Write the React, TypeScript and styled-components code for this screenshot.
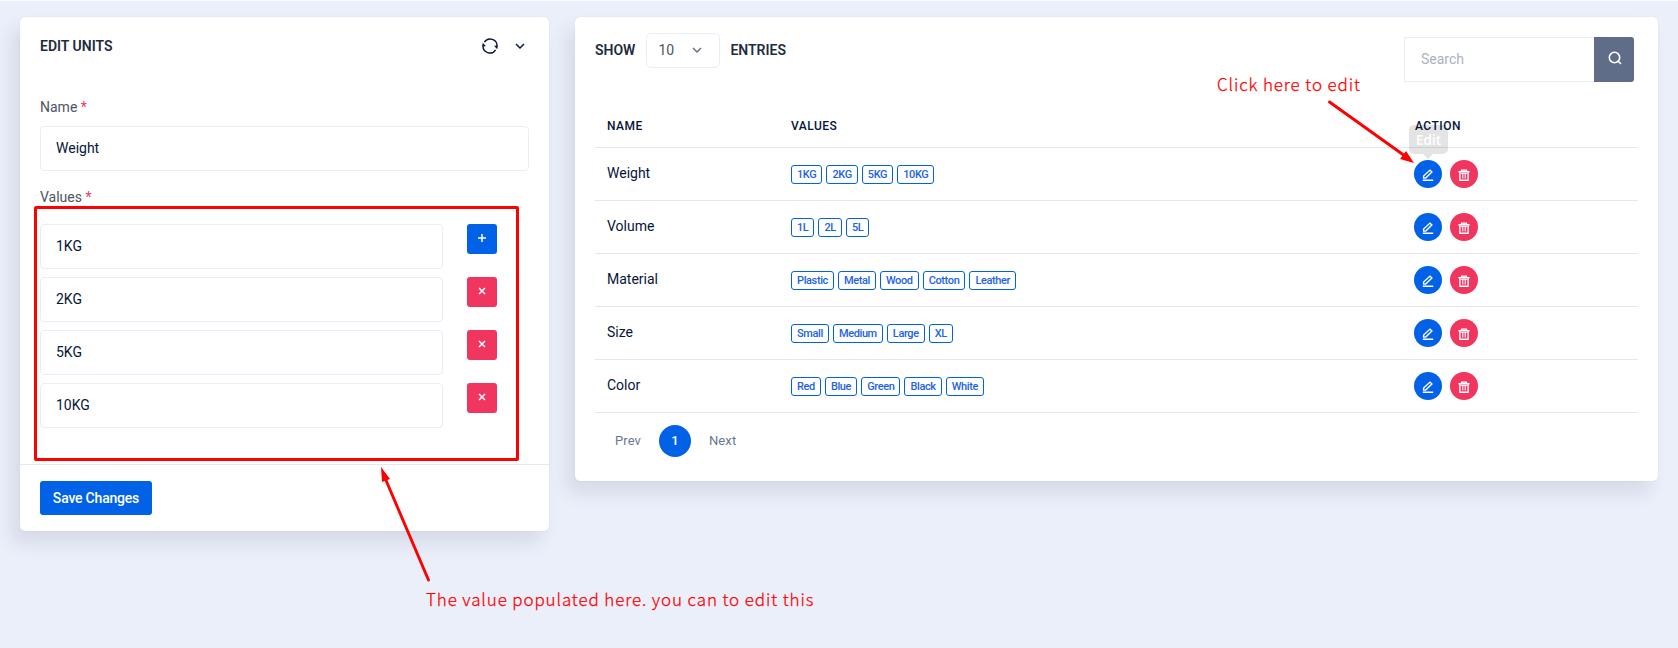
import React from 'react';
import styled, { createGlobalStyle } from 'styled-components';

const GlobalStyle = createGlobalStyle`
  * { box-sizing: border-box; }
  html, body { margin: 0; padding: 0; }
  body {
    background: #ebeffa;
    font-family: Roboto, "Liberation Sans", sans-serif;
    font-size: 14px;
    color: #06163a;
    overflow: hidden;
  }
  input, button, select { font: inherit; }
`;

const Page = styled.div`
  position: relative;
  height: 648px;
  border-top: 1px solid #fcfcfd;
  padding: 16px 20px 0;
  display: flex;
  align-items: flex-start;
  gap: 26px;
  overflow: hidden;
`;

const Card = styled.section<{ $width: number; $height: number }>`
  width: ${(p) => p.$width}px;
  height: ${(p) => p.$height}px;
  flex: none;
  background: #fff;
  border-radius: 5px;
  box-shadow: -8px 12px 18px 0 rgba(25, 42, 70, 0.1), 0 0 1px rgba(60, 60, 100, 0.2);
`;

const CardHeader = styled.header`
  height: 73px;
  padding: 20px 24px 0 20px;
  display: flex;
  justify-content: space-between;
`;

const Title = styled.h2`
  margin: 0;
  font-size: 14px;
  line-height: 18px;
  font-weight: 600;
  color: #212b40;
`;

const Tools = styled.div`
  display: flex;
  align-items: center;
  gap: 17px;
  height: 18px;
`;

const FormBody = styled.div`
  height: 374px;
  padding: 8px 20px 0;
`;

const Label = styled.label`
  display: block;
  height: 28px;
  line-height: 18px;
  color: #4d5463;
  span { color: #f1355f; }
`;

const Input = styled.input<{ $width?: number }>`
  display: block;
  width: ${(p) => (p.$width ? `${p.$width}px` : '100%')};
  height: 45px;
  padding: 0 15px 2px;
  border: 1px solid #e9edf8;
  border-radius: 4px;
  background: #fff;
  color: #06163a;
  outline: none;
`;

const ValuesLabel = styled(Label)`
  margin-top: 17px;
  height: 36px;
`;

const ValueRows = styled.div`
  display: grid;
  row-gap: 8px;
`;

const ValueRow = styled.div`
  display: flex;
  gap: 24px;
  align-items: flex-start;
`;

const SquareButton = styled.button<{ $color: string }>`
  width: 30px;
  height: 30px;
  padding: 0 0 2px 0;
  display: flex;
  align-items: center;
  justify-content: center;
  border: 0;
  border-radius: 3px;
  color: #fff;
  background: ${(p) => p.$color};
`;

const CardFooter = styled.footer`
  border-top: 1px solid #e6e7f0;
  padding: 16px 20px;
`;

const SaveButton = styled.button`
  width: 112px;
  height: 34px;
  padding: 0;
  border: 0;
  border-radius: 3px;
  background: #0162e8;
  color: #fff;
  font-weight: 500;
  letter-spacing: -0.2px;
`;

const ListTop = styled.div`
  height: 75px;
  padding: 16px 24px 0 20px;
  display: flex;
  align-items: flex-start;
  justify-content: space-between;
`;

const LengthControl = styled.div`
  display: flex;
  align-items: center;
  height: 35px;
  font-weight: 600;
  line-height: 17px;
  color: #212b40;
`;

const LengthSelect = styled.div`
  width: 74px;
  height: 35px;
  margin: 0 10px 0 11px;
  padding: 0 17px 0 11px;
  display: flex;
  align-items: center;
  justify-content: space-between;
  border: 1px solid #e9edf6;
  border-radius: 5px;
  font-weight: 400;
  color: #4d5463;
`;

const SearchBox = styled.div`
  display: flex;
  margin-top: 4px;
`;

const SearchInput = styled.input`
  width: 190px;
  height: 45px;
  padding: 0 15px 2px 16px;
  border: 1px solid #e9edf6;
  border-right: 0;
  outline: none;
  &::placeholder { color: #a9b1c5; opacity: 1; }
`;

const SearchButton = styled.button`
  width: 40px;
  height: 45px;
  padding: 0 0 3px 1px;
  display: flex;
  align-items: center;
  justify-content: center;
  border: 0;
  border-radius: 0 3px 3px 0;
  background: #5f6d88;
  color: #fff;
`;

const Table = styled.div`
  margin: 12px 20px 0 20px;
`;

const TableRow = styled.div<{ $head?: boolean }>`
  height: ${(p) => (p.$head ? 44 : 53)}px;
  padding: ${(p) => (p.$head ? '13px' : '12px')} 12px 0;
  display: grid;
  grid-template-columns: 184px 623px 1fr;
  border-bottom: 1px solid #e5e7f0;
  ${(p) => p.$head && 'font-size: 12px; font-weight: 500; letter-spacing: 0.5px; line-height: 18px;'}
`;

const ActionHead = styled.span`
  padding-left: 1px;
`;

const NameCell = styled.div`
  line-height: 26px;
`;

const BadgeCell = styled.div`
  display: flex;
  gap: 4px;
  padding-top: 5px;
`;

const Badge = styled.span`
  height: 19px;
  padding: 0 5px;
  line-height: 18px;
  border: 1px solid #0162e8;
  border-radius: 3px;
  color: #1c63e6;
  font-size: 11px;
  font-weight: 500;
  letter-spacing: -0.38px;
  white-space: nowrap;
`;

const ActionCell = styled.div`
  display: flex;
  gap: 8px;
`;

const RoundButton = styled.button<{ $color: string }>`
  position: relative;
  width: 28px;
  height: 28px;
  padding: 1px 0 0 0;
  display: flex;
  align-items: center;
  justify-content: center;
  border: 0;
  border-radius: 50%;
  color: #fff;
  background: ${(p) => p.$color};
`;

const Tooltip = styled.span`
  position: absolute;
  left: -5px;
  bottom: 34px;
  width: 39px;
  height: 29px;
  border-radius: 5px;
  background: rgba(0, 0, 0, 0.105);
  color: #fff;
  font: 600 13.5px/30px "Open Sans", sans-serif;
  text-align: center;
  &::after {
    content: '';
    position: absolute;
    top: 100%;
    left: 14px;
    border: 5px solid transparent;
    border-top-color: rgba(0, 0, 0, 0.105);
    border-bottom: 0;
  }
`;

const Pager = styled.nav`
  display: flex;
  align-items: center;
  margin: 12px 0 0 40px;
  height: 32px;
  gap: 18px;
  font-size: 13px;
  color: #6b7790;
`;

const PageLink = styled.span`
  padding: 0 0 1px;
  letter-spacing: 0.1px;
`;

const PageNumber = styled.span`
  width: 32px;
  height: 32px;
  border-radius: 50%;
  line-height: 31px;
  text-align: center;
  background: #0162e8;
  color: #fff;
  font-weight: 500;
`;

const Outline = styled.div`
  position: absolute;
  left: 34px;
  top: 205px;
  width: 485px;
  height: 255px;
  border: 3px solid #fe0000;
  border-radius: 2px;
`;

const Note = styled.div<{ $x: number; $y: number; $width: number }>`
  position: absolute;
  left: ${(p) => p.$x}px;
  top: ${(p) => p.$y}px;
  width: ${(p) => p.$width}px;
  color: #fe0000;
  font: 300 17px/24px "Noto Sans CJK SC", "Open Sans", sans-serif;
  letter-spacing: 0.88px;
  -webkit-text-stroke: 0.25px #fe0000;
  white-space: nowrap;
`;

const Arrows = styled.svg`
  position: absolute;
  left: 0;
  top: -1px;
  pointer-events: none;
`;

const ChevronIcon = ({ color = 'currentColor' }: { color?: string }) => (
  <svg width="10" height="7" viewBox="0 0 10 7" fill="none" stroke={color} strokeWidth="1.5">
    <path d="M1 1l4 4 4-4" />
  </svg>
);

const RefreshIcon = () => (
  <svg width="16" height="16" viewBox="0 0 16 16" fill="none" stroke="currentColor" strokeWidth="1.4">
    <path d="M2.4 4.2A6.8 6.8 0 0 1 14.9 8.6M13.6 11.800A6.8 6.8 0 0 1 1.1 7.4" />
    <path d="M12 7.700h3.8l-.6 3.6zM.2 8.3H4L.8 4.700z" fill="currentColor" stroke="none" />
  </svg>
);

const PlusIcon = () => (
  <svg width="8" height="8" viewBox="0 0 8 8" stroke="currentColor" strokeWidth="1.5">
    <path d="M4 0v8M0 4h8" />
  </svg>
);

const CrossIcon = () => (
  <svg width="8" height="8" viewBox="0 0 8 8" stroke="currentColor" strokeWidth="1.5">
    <path d="M1 1l6 6M7 1L1 7" />
  </svg>
);

const SearchIcon = () => (
  <svg width="14" height="14" viewBox="0 0 14 14" fill="none" stroke="currentColor" strokeWidth="1.6">
    <circle cx="6.5" cy="6.5" r="5.2" />
    <path d="M10.2 10.2L13 13" />
  </svg>
);

const EditIcon = () => (
  <svg width="12" height="12" viewBox="0 0 12 12" fill="none" stroke="currentColor" strokeWidth="1.4">
    <path d="M1.6 9.1V7L8 1.1 9.9 3 3.7 9.1zM.8 11.3h10.4" />
  </svg>
);

const TrashIcon = () => (
  <svg width="12" height="12" viewBox="0 0 12 12" fill="none" stroke="currentColor">
    <path d="M.4 2.7h11.2" strokeWidth="1.5" />
    <path d="M3.6 2.5V1.1h4.8v1.4M1.9 3v8.2h8.2V3" strokeWidth="1.4" />
    <path d="M2.5 4.2h7M4.8 4v5.5M7.2 4v5.5" strokeWidth="1.1" />
  </svg>
);

const values = ['1KG', '2KG', '5KG', '10KG'];
const units = [
  { name: 'Weight', values: ['1KG', '2KG', '5KG', '10KG'] },
  { name: 'Volume', values: ['1L', '2L', '5L'] },
  { name: 'Material', values: ['Plastic', 'Metal', 'Wood', 'Cotton', 'Leather'] },
  { name: 'Size', values: ['Small', 'Medium', 'Large', 'XL'] },
  { name: 'Color', values: ['Red', 'Blue', 'Green', 'Black', 'White'] },
];

export default function App() {
  return (
    <>
      <GlobalStyle />
      <Page>
        <Card $width={529} $height={514}>
          <CardHeader>
            <Title>EDIT UNITS</Title>
            <Tools>
              <RefreshIcon />
              <ChevronIcon />
            </Tools>
          </CardHeader>
          <FormBody>
            <Label>Name <span>*</span></Label>
            <Input defaultValue="Weight" />
            <ValuesLabel>Values <span>*</span></ValuesLabel>
            <ValueRows>
              {values.map((v, i) => (
                <ValueRow key={v}>
                  <Input $width={403} defaultValue={v} />
                  <SquareButton $color={i === 0 ? '#0162e8' : '#f0355f'}>
                    {i === 0 ? <PlusIcon /> : <CrossIcon />}
                  </SquareButton>
                </ValueRow>
              ))}
            </ValueRows>
          </FormBody>
          <CardFooter>
            <SaveButton>Save Changes</SaveButton>
          </CardFooter>
        </Card>

        <Card $width={1083} $height={464}>
          <ListTop>
            <LengthControl>
              <span>SHOW</span>
              <LengthSelect><span>10</span><ChevronIcon color="#697080" /></LengthSelect>
              <span>ENTRIES</span>
            </LengthControl>
            <SearchBox>
              <SearchInput placeholder="Search" />
              <SearchButton><SearchIcon /></SearchButton>
            </SearchBox>
          </ListTop>
          <Table>
            <TableRow $head>
              <span>NAME</span>
              <span>VALUES</span>
              <ActionHead>ACTION</ActionHead>
            </TableRow>
            {units.map((u, i) => (
              <TableRow key={u.name}>
                <NameCell>{u.name}</NameCell>
                <BadgeCell>{u.values.map((v) => <Badge key={v}>{v}</Badge>)}</BadgeCell>
                <ActionCell>
                  <RoundButton $color="#0162e8">
                    <EditIcon />
                    {i === 0 && <Tooltip>Edit</Tooltip>}
                  </RoundButton>
                  <RoundButton $color="#f0355f"><TrashIcon /></RoundButton>
                </ActionCell>
              </TableRow>
            ))}
          </Table>
          <Pager>
            <PageLink>Prev</PageLink>
            <PageNumber>1</PageNumber>
            <PageLink>Next</PageLink>
          </Pager>
        </Card>

        <Outline />
        <Arrows width="1678" height="648" viewBox="0 0 1678 648" fill="#fe0000" stroke="#fe0000">
          <path d="M1329.500 102L1405 156M428.500 580L385 478" strokeWidth="2.9" strokeLinecap="round" />
          <path d="M1414 163l-14-4 6-8zM381 467l9 12-8 3z" stroke="none" />
        </Arrows>
        <Note $x={1217} $y={71} $width={146}>Click here to edit</Note>
        <Note $x={426} $y={586} $width={392}>The value populated here. you can to edit this</Note>
      </Page>
    </>
  );
}
